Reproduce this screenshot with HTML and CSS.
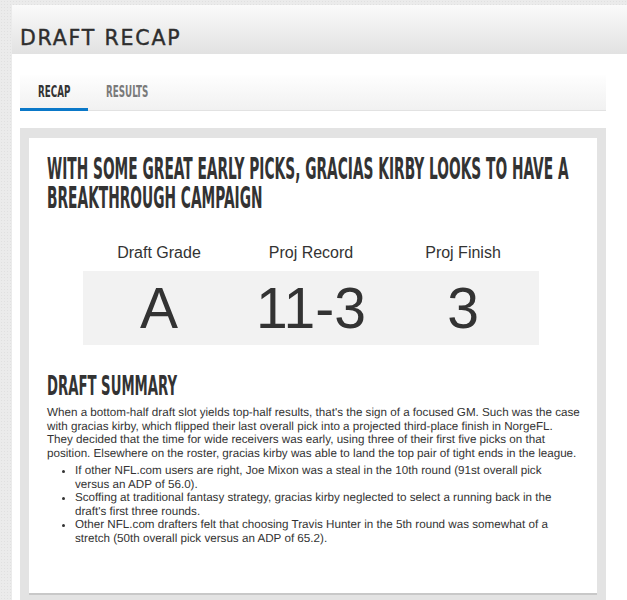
FILE: index.html
```html
<!DOCTYPE html>
<html>
<head>
<meta charset="utf-8">
<link rel="stylesheet" href="styles.css">
</head>
<body>
<div class="page">
  <div class="header"><h2 class="header-title">DRAFT RECAP</h2></div>
  <div class="content">
    <div class="tabs">
      <div class="tab active"><span class="tab-label">RECAP</span></div>
      <div class="tab"><span class="tab-label">RESULTS</span></div>
    </div>
    <div class="card">
      <div class="card-inner">
        <h1 class="headline"><span class="cond">WITH SOME GREAT EARLY PICKS, GRACIAS KIRBY LOOKS TO HAVE A</span><span class="cond">BREAKTHROUGH CAMPAIGN</span></h1>
        <div class="stats">
          <div class="stat-labels">
            <div class="stat-label">Draft Grade</div>
            <div class="stat-label">Proj Record</div>
            <div class="stat-label">Proj Finish</div>
          </div>
          <div class="stat-values">
            <div class="stat-value">A</div>
            <div class="stat-value">11-3</div>
            <div class="stat-value">3</div>
          </div>
        </div>
        <h3 class="summary-title"><span class="cond">DRAFT SUMMARY</span></h3>
        <p class="summary">When a bottom-half draft slot yields top-half results, that's the sign of a focused GM. Such was the case with gracias kirby, which flipped their last overall pick into a projected third-place finish in NorgeFL. They decided that the time for wide receivers was early, using three of their first five picks on that position. Elsewhere on the roster, gracias kirby was able to land the top pair of tight ends in the league.</p>
        <ul class="bullets">
          <li>If other NFL.com users are right, Joe Mixon was a steal in the 10th round (91st overall pick versus an ADP of 56.0).</li>
          <li>Scoffing at traditional fantasy strategy, gracias kirby neglected to select a running back in the draft's first three rounds.</li>
          <li>Other NFL.com drafters felt that choosing Travis Hunter in the 5th round was somewhat of a stretch (50th overall pick versus an ADP of 65.2).</li>
        </ul>
      </div>
    </div>
  </div>
</div>
</body>
</html>
```
FILE: styles.css
```css
html, body {
  margin: 0;
  padding: 0;
}
body {
  background-color: #ebebeb;
  background-image: radial-gradient(#e0e0e0 0.8px, transparent 0.9px);
  background-size: 3px 3px;
  font-family: "Liberation Sans", Arial, sans-serif;
  color: #333;
  height: 600px;
  overflow: hidden;
}
.page {
  margin: 5px 0 0 12px;
  background: #fff;
  height: 595px;
}
.header {
  height: 44px;
  background: linear-gradient(#fafafa, #e2e2e2);
  display: flex;
  align-items: flex-end;
  padding: 0 0 5px 8px;
}
.header-title {
  margin: 0;
  font-family: "DejaVu Sans", sans-serif;
  font-weight: normal;
  font-size: 20.5px;
  line-height: 22px;
  letter-spacing: 1.8px;
  color: #2e2e2e;
  -webkit-text-stroke: 0.4px #2e2e2e;
}
.content {
  padding: 21px 21px 0 8px;
}
.tabs {
  height: 35px;
  display: flex;
  background: linear-gradient(#fefefe, #f1f1f1);
  border-bottom: 1px solid #e2e2e2;
}
.tab {
  padding: 0 18px 0 18px;
  display: flex;
  align-items: center;
  box-sizing: border-box;
  border-bottom: 3px solid transparent;
  margin-bottom: -1px;
}
.tab.active {
  border-bottom-color: #0a78c8;
}
.tab-label {
  font-family: "DejaVu Sans", sans-serif;
  font-stretch: condensed;
  font-weight: bold;
  font-size: 16.5px;
  color: #7a7a7a;
  display: inline-block;
  transform: scaleX(0.59);
  transform-origin: left center;
  width: 32px;
  white-space: nowrap;
}
.tab.active .tab-label {
  color: #333;
}
.card {
  margin-top: 17px;
  background: #e3e3e3;
  padding: 10px 9px 7px 9px;
}
.card-inner {
  background: #fff;
  padding: 16px 18px 0 18px;
  height: 439px;
  box-shadow: 0 2px 0 #c8c8c8;
}
.cond {
  display: block;
  font-family: "DejaVu Sans", sans-serif;
  font-stretch: condensed;
  font-weight: bold;
  white-space: nowrap;
  transform-origin: left center;
}
.headline {
  margin: 0;
  font-size: 30px;
  line-height: 29px;
  color: #333;
}
.headline .cond {
  transform: scaleX(0.51);
}
.stats {
  margin: 31px 0 0 36px;
  width: 456px;
}
.stat-labels, .stat-values {
  display: grid;
  grid-template-columns: repeat(3, 1fr);
  text-align: center;
}
.stat-label {
  font-size: 16px;
  line-height: 20px;
  color: #333;
}
.stat-values {
  margin-top: 8px;
  background: #f2f2f2;
  height: 74px;
  align-items: center;
}
.stat-value {
  font-size: 57px;
  line-height: 74px;
  color: #333;
}
.summary-title {
  margin: 28px 0 0 0;
  font-size: 26px;
  line-height: 26px;
  color: #333;
}
.summary-title .cond {
  transform: scaleX(0.566);
}
.summary, .bullets {
  text-rendering: geometricPrecision;
  font-size: 11.65px;
  line-height: 13.5px;
  color: #333;
}
.summary {
  margin: 7px -2.5px 0 0;
}
.bullets {
  margin: 4px 2px 0 0;
  padding-left: 28px;
}
```
